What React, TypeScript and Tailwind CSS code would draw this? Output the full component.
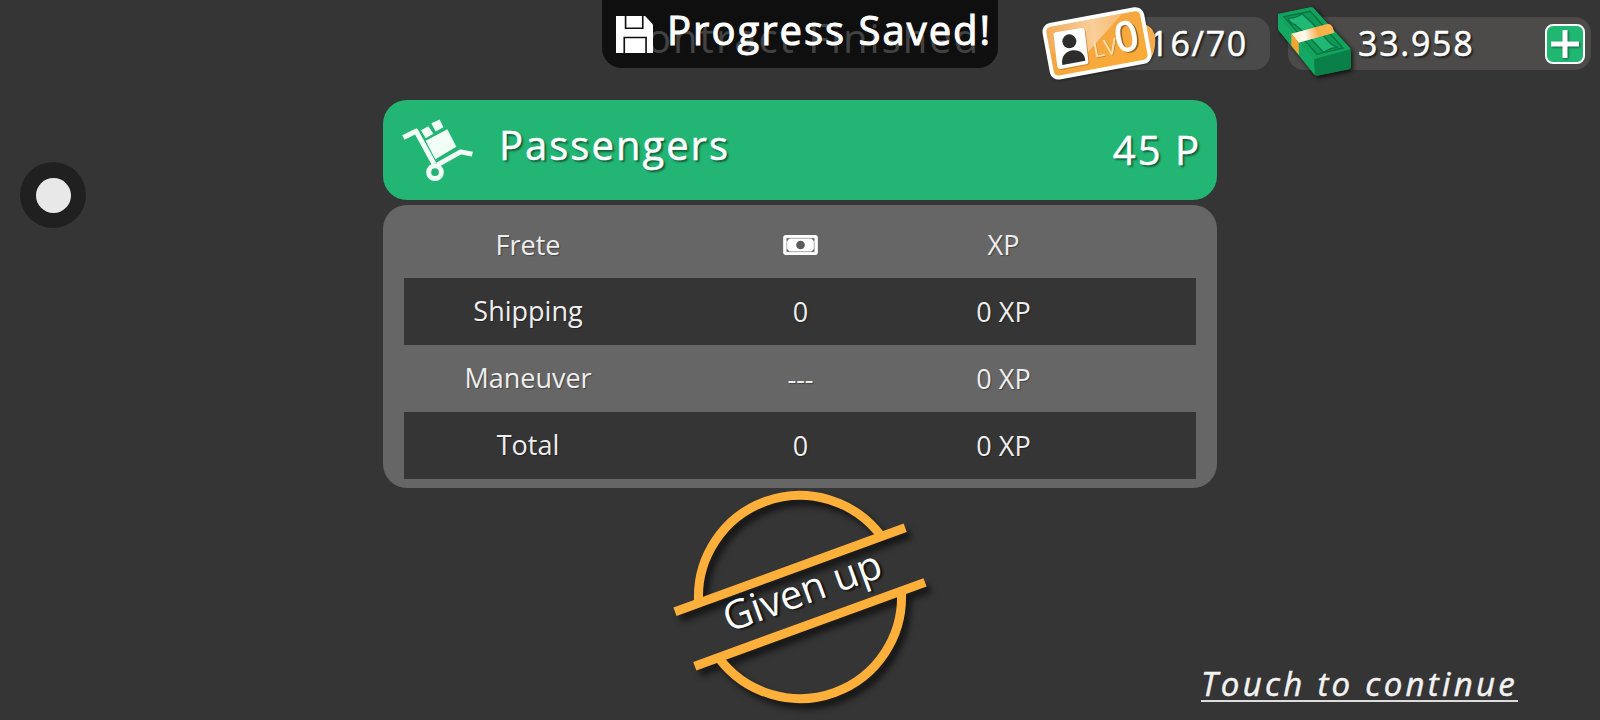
import React from "react";

const rows = [
  { label: "Shipping", money: "0", xp: "0 XP", dark: true },
  { label: "Maneuver", money: "---", xp: "0 XP", dark: false },
  { label: "Total", money: "0", xp: "0 XP", dark: true },
];

function SaveIcon() {
  return (
    <svg viewBox="0 0 112 112" className="size-[37px] shrink-0" aria-hidden="true">
      <path d="M0 0H88L112 26V112H0Z" fill="#fff" />
      <path d="M29 0V37H81V0" fill="none" stroke="#111" strokeWidth="5" />
      <path d="M25 112V65H91V112" fill="none" stroke="#111" strokeWidth="5" />
    </svg>
  );
}

function LicenseBadge() {
  return (
    <svg viewBox="30 9 348 240" className="h-[80px] w-[116px] drop-shadow-[1px_1px_1px_rgba(0,0,0,0.4)]" role="img" aria-label="Level 0">
      <defs>
        <linearGradient id="licenseFill" x1="0" y1="0" x2="1" y2="1">
          <stop offset="0" stopColor="#f0a44a" />
          <stop offset="1" stopColor="#fbab35" />
        </linearGradient>
        <linearGradient id="licenseShine" x1="0" y1="0" x2="1" y2="0">
          <stop offset="0" stopColor="#f3ae5c" />
          <stop offset="0.6" stopColor="#fbdcb8" />
          <stop offset="1" stopColor="#f8c078" />
        </linearGradient>
      </defs>
      <path d="M340 72Q374 80 376 120Q376 165 355 182Z" fill="#f6ab4c" />
      <g transform="rotate(-10.5 202 130)">
        <rect x="46" y="44" width="310" height="172" rx="26" fill="#fff" />
        <rect x="58" y="56" width="286" height="148" rx="14" fill="url(#licenseFill)" />
        <path d="M72 56H292L160 158L58 130V70Q58 56 72 56Z" fill="url(#licenseShine)" opacity="0.75" />
      </g>
      <path d="M80 102L158 88Q165 87 167 95L178 186Q179 194 171 195L97 210Q88 211 86 203L71 112Q70 104 80 102Z" fill="#b4691c" opacity="0.6" />
      <path d="M78 97L154 84Q162 83 164 91L175 184Q176 192 168 193L92 207Q84 208 82 200L71 107Q70 98 78 97Z" fill="#fff" />
      <circle cx="118" cy="124" r="21" fill="#2d2d2d" />
      <path d="M97 195C92 170 108 153 128 151C150 149 164 161 166 182Z" fill="#2d2d2d" />
      <g transform="rotate(-10.5 202 130)" fontFamily="'Open Sans', sans-serif">
        <text x="187" y="174" fontSize="66" fill="#b4691c" opacity="0.5">LV</text>
        <text x="185" y="171" fontSize="66" fill="#fde3b4">LV</text>
        <text x="261" y="173" fontSize="122" fill="#6b4a20" stroke="#6b4a20" strokeWidth="4" opacity="0.7">0</text>
        <text x="256" y="169" fontSize="122" fill="#fff" stroke="#fff" strokeWidth="4">0</text>
      </g>
    </svg>
  );
}

function MoneyStack() {
  return (
    <svg viewBox="48 12 234 225" className="h-[75px] w-[78px] drop-shadow-[2px_2px_2px_rgba(0,0,0,0.7)]" aria-hidden="true">
      <defs>
        <linearGradient id="bandFill" x1="0" y1="0.5" x2="1" y2="0.4">
          <stop offset="0" stopColor="#ffe9c4" />
          <stop offset="0.3" stopColor="#fffaf0" />
          <stop offset="0.62" stopColor="#f9ad48" />
          <stop offset="1" stopColor="#ffb84c" />
        </linearGradient>
      </defs>
      <path d="M54 42L152 22Q158 21 163 27L270 143Q273 146 273 151V200Q273 206 267 208L171 227Q165 228 161 222L57 92Q54 88 54 84Z" fill="#0a8048" />
      <path d="M54 42L152 22Q158 21 163 27L272 147L163 178Z" fill="#12a35c" />
      <path d="M54 42L163 178L165 226L57 92Q54 88 54 84Z" fill="#14a863" />
      <path d="M163 178L272 149V200Q273 206 267 208L171 227L165 226Z" fill="#0a8048" />
      <path d="M72 50L151 34L249 144L171 163Z" fill="#0f9955" stroke="#087344" strokeWidth="4" />
      <path d="M84 54Q106 56 126 41L154 67L203 122Q214 136 234 142Q208 144 191 157L142 105L105 74Q90 70 84 54Z" fill="#21b875" stroke="#087344" strokeWidth="4" />
      <path d="M94 101L202 72Q212 70 218 82L223 98L116 128Z" fill="url(#bandFill)" />
      <path d="M94 101L116 128L117 165L94 137Z" fill="#f5a434" />
    </svg>
  );
}

function HandTruck() {
  return (
    <svg viewBox="96 84 216 188" className="h-[63px] w-[72px] shrink-0" aria-hidden="true">
      <g fill="none" stroke="#f2fff7" strokeWidth="15" strokeLinejoin="round">
        <path d="M100 139L138 120L192 218" />
        <path d="M202 221L272 182L307 189" />
        <circle cx="195" cy="243" r="19" />
      </g>
      <g fill="#f2fff7">
        <path d="M167 149L232 114L259 167L196 204Z" />
        <path d="M153 117L175 105L190 128L167 141Z" />
        <path d="M184 96L209 85L220 108L197 121Z" />
      </g>
    </svg>
  );
}

function Banknote() {
  return (
    <svg viewBox="0 0 104 60" className="mx-auto h-5 w-[35px]" role="img" aria-label="Money">
      <rect width="104" height="60" rx="8" fill="#fff" />
      <rect x="11" y="10" width="82" height="40" fill="none" stroke="#aaa" strokeWidth="3" />
      <path d="M11 10h9l-9 9zM93 10h-9l9 9zM11 50h9l-9-9zM93 50h-9l9-9z" fill="#666" />
      <circle cx="52" cy="30" r="13" fill="#5c5c5c" />
    </svg>
  );
}

function Stamp() {
  return (
    <svg viewBox="-128 -109 256 218" className="h-[218px] w-[256px] overflow-visible" role="img" aria-label="Given up">
      <g className="drop-shadow-[5px_6px_3px_rgba(0,0,0,0.6)]">
        <g transform="rotate(-20)" fill="none" stroke="#ffb03b" strokeWidth="9">
          <path d="M-97.3 -29A101.5 101.5 0 0 1 97.3 -29" />
          <path d="M-97.3 29A101.5 101.5 0 0 0 97.3 29" />
          <path d="M-122.5 -29H122.5M-122.5 29H122.5" />
        </g>
      </g>
      <text
        transform="rotate(-20)"
        x="4"
        y="9"
        textAnchor="middle"
        fontFamily="'Open Sans', sans-serif"
        fontSize="40"
        fill="#fff"
        className="[text-shadow:2px_2px_2px_rgba(0,0,0,0.7)]"
      >
        Given up
      </text>
    </svg>
  );
}

export default function App() {
  return (
    <div className="flex min-h-screen flex-col overflow-hidden bg-[#353535] font-['Open_Sans',sans-serif] text-white">
      <header className="relative grid h-[100px] shrink-0 grid-cols-[1fr_auto_1fr]">
        <h1 className="col-start-2 pt-[10px] text-[40px] leading-[56px] tracking-wider text-[#ddd]">Contract Finished</h1>

        <div className="flex items-start justify-end gap-[18px] pt-[17px] pr-[9px] text-[34px] leading-[53px] tracking-wider [-webkit-text-stroke:0.5px_white] [text-shadow:2px_2px_2px_rgba(0,0,0,0.6)]">
          <div className="relative rounded-2xl bg-[#4a4a4a] pr-[22px] pl-10">
            <span>16/70</span>
            <div className="absolute -top-[14px] right-[114px] tracking-normal [-webkit-text-stroke:0] [text-shadow:none]">
              <LicenseBadge />
            </div>
          </div>
          <div className="relative flex w-[303px] items-center justify-between rounded-2xl bg-[#4c4b4a] pr-[6px] pl-[70px]">
            <div className="absolute -top-[13px] -left-3">
              <MoneyStack />
            </div>
            <span>33.958</span>
            <button
              type="button"
              aria-label="Add money"
              className="flex size-10 items-center justify-center rounded-lg border-2 border-white bg-[#20b773]"
            >
              <svg viewBox="0 0 28 28" className="size-7 drop-shadow-[1px_1px_1px_rgba(0,0,0,0.5)]" aria-hidden="true">
                <path d="M14 0V28M0 14H28" stroke="#fff" strokeWidth="5" />
              </svg>
            </button>
          </div>
        </div>

        <div
          role="status"
          className="absolute top-0 left-1/2 flex h-[68px] w-[396px] -translate-x-1/2 items-center gap-[14px] rounded-b-[20px] bg-black/70 pl-[14px]"
        >
          <SaveIcon />
          <span className="pb-2 text-[40px] leading-[52px] tracking-wider whitespace-nowrap [-webkit-text-stroke:1px_white]">Progress Saved!</span>
        </div>
      </header>

      <main className="grid grid-cols-[1fr_minmax(0,834px)_1fr]">
        <button
          type="button"
          aria-label="Menu"
          className="mt-[62px] ml-5 flex size-[66px] items-center justify-center rounded-full bg-[#202020]"
        >
          <span className="size-[35px] rounded-full bg-[#e8e8e8]" />
        </button>

        <section className="flex flex-col gap-[5px]">
          <div className="flex h-[100px] items-center rounded-3xl bg-[#22b573] pr-4 pl-[19px] text-[40px] leading-[56px] tracking-wider [-webkit-text-stroke:0.5px_white] [text-shadow:2px_2px_2px_rgba(0,0,0,0.5)]">
            <HandTruck />
            <h2 className="grow pb-[10px] pl-[25px]">Passengers</h2>
            <span>45 P</span>
          </div>

          <div className="rounded-3xl bg-[#666] px-[21px] pt-[7px] pb-[9px]">
            <table className="w-full table-fixed border-collapse text-center text-[27px] leading-9 text-[#eee] [text-shadow:1px_1px_1px_rgba(0,0,0,0.35)]">
              <colgroup>
                <col className="w-[248px]" />
                <col className="w-[297px]" />
                <col className="w-[109px]" />
                <col />
              </colgroup>
              <thead>
                <tr className="h-[66px]">
                  <th scope="col" className="font-normal">Frete</th>
                  <th scope="col"><Banknote /></th>
                  <th scope="col" className="font-normal">XP</th>
                  <td />
                </tr>
              </thead>
              <tbody>
                {rows.map((row) => (
                  <tr key={row.label} className={row.dark ? "h-[67px] bg-[#353535]" : "h-[67px]"}>
                    <th scope="row" className="pb-[2px] font-normal">{row.label}</th>
                    <td>{row.money}</td>
                    <td className="whitespace-nowrap">{row.xp}</td>
                    <td />
                  </tr>
                ))}
              </tbody>
            </table>
          </div>
        </section>
      </main>

      <footer className="grid grid-cols-[1fr_auto_1fr]">
        <div className="col-start-2">
          <Stamp />
        </div>
        <button
          type="button"
          className="mr-[82px] mb-1 self-end justify-self-end border-b-2 border-[#ddd] text-[33px] leading-[32px] tracking-widest text-[#f2f2f2] italic [-webkit-text-stroke:0.5px_#f2f2f2]"
        >
          Touch to continue
        </button>
      </footer>
    </div>
  );
}
